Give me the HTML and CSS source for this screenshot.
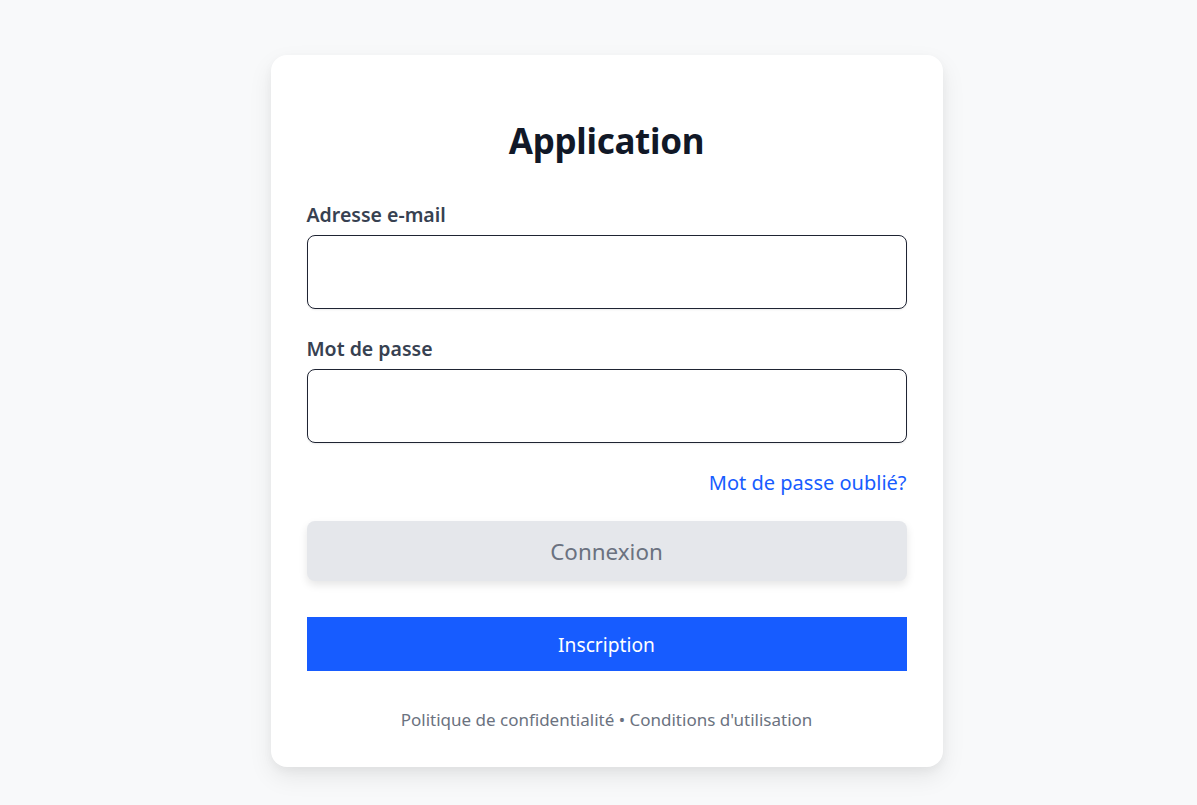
FILE: index.html
```html
<!DOCTYPE html>
<html lang="fr">
<head>
<meta charset="utf-8">
<title>Application</title>
<link rel="stylesheet" href="styles.css">
</head>
<body>
<main class="page">
  <section class="card">
    <h1 class="title">Application</h1>
    <form class="form">
      <div class="field">
        <label class="label" for="email">Adresse e-mail</label>
        <input class="input" id="email" type="email">
      </div>
      <div class="field">
        <label class="label" for="pwd">Mot de passe</label>
        <input class="input" id="pwd" type="password">
      </div>
      <div class="forgot-row"><a class="forgot" href="#">Mot de passe oublié?</a></div>
      <button type="button" class="btn-login">Connexion</button>
      <button type="button" class="btn-signup">Inscription</button>
    </form>
    <p class="footer">Politique de confidentialité • Conditions d'utilisation</p>
  </section>
</main>
</body>
</html>
```
FILE: styles.css
```css
* { box-sizing: border-box; }
html, body { margin: 0; padding: 0; }
body {
  background: #f8f9fa;
  font-family: "Noto Sans", "Open Sans", sans-serif;
  color: #111827;
}
.page {
  min-height: 805px;
  display: flex;
  justify-content: center;
  padding-top: 55px;
  padding-left: 16px;
}
.card {
  width: 672px;
  height: 712px;
  background: #fff;
  border-radius: 16px;
  box-shadow: 0 10px 25px rgba(0,0,0,0.08), 0 4px 10px rgba(0,0,0,0.04);
  padding: 60px 36px 0;
  display: flex;
  flex-direction: column;
}
.title {
  margin: 0;
  text-align: center;
  font-size: 35px;
  line-height: 52px;
  font-weight: 700;
  color: #111827;
  letter-spacing: -0.3px;
}
.form {
  display: flex;
  flex-direction: column;
  margin-top: 35px;
}
.field { display: flex; flex-direction: column; margin-bottom: 27px; }
.label {
  font-size: 19.5px;
  font-weight: 600;
  color: #374151;
  line-height: 26px;
  margin-bottom: 7px;
}
.input {
  height: 74px;
  border: 1px solid #1f2433;
  border-radius: 8px;
  background: #fff;
  box-shadow: 0 1px 2px rgba(0,0,0,0.08);
  font: inherit;
  padding: 0 12px;
}
.forgot-row { display: flex; justify-content: flex-end; margin-top: 0; }
.forgot {
  color: #175cff;
  text-decoration: none;
  font-size: 20px;
  line-height: 26px;
}
.btn-login {
  margin-top: 25px;
  height: 60px;
  border: none;
  border-radius: 8px;
  background: #e5e7eb;
  color: #6b7280;
  font-family: inherit;
  font-size: 22.4px;
  box-shadow: 0 4px 8px rgba(0,0,0,0.1);
}
.btn-signup {
  margin-top: 36px;
  height: 54px;
  border: none;
  border-radius: 0;
  background: #175cff;
  color: #fff;
  font-family: inherit;
  font-size: 19.2px;
}
.footer {
  margin: 38px 0 0;
  text-align: center;
  font-size: 17px;
  line-height: 22px;
  color: #6b7280;
}
```
